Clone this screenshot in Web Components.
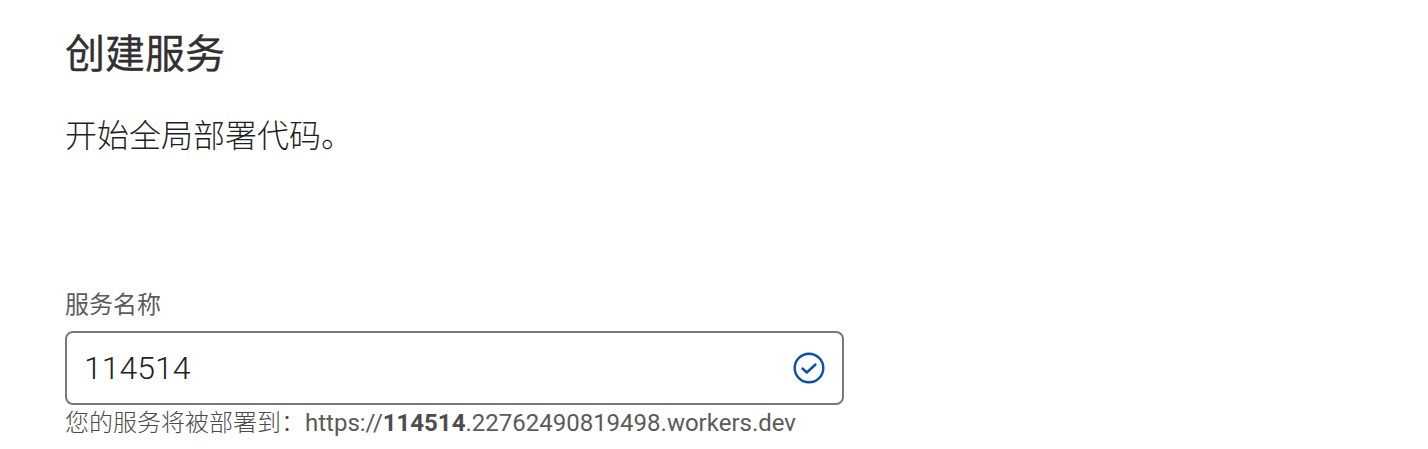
<!DOCTYPE html>
<html lang="zh-CN">
<head>
<meta charset="utf-8">
<title>创建服务</title>
<style>
  html, body { margin: 0; background: #fff; }
  body { font-family: Roboto, "Noto Sans CJK SC", sans-serif; }
</style>
</head>
<body>
<create-service>
  <service-field label="服务名称" value="114514">
    <span>您的服务将被部署到：</span>https://<b>114514</b>.22762490819498.workers.dev
  </service-field>
</create-service>

<script>
class CreateService extends HTMLElement {
  constructor() {
    super();
    this.attachShadow({ mode: 'open' });
    this.shadowRoot.innerHTML = `
      <style>
        :host { display: block; padding: 0 0 0 65px; color: #313131; font-family: Roboto, "Noto Sans CJK SC", sans-serif; }
        h1 { margin: 0; padding-top: 31px; font-size: 40px; line-height: 48px; font-weight: 400; -webkit-text-stroke: 0.3px #313131; }
        p { margin: 0; padding-top: 36px; font-size: 32px; line-height: 42px; font-weight: 300; color: #1f1f1f; }
        .body { padding-top: 132px; }
      </style>
      <h1>创建服务</h1>
      <p>开始全局部署代码。</p>
      <div class="body"><slot></slot></div>
    `;
  }
}

class ServiceField extends HTMLElement {
  constructor() {
    super();
    this.attachShadow({ mode: 'open' });
    const label = this.getAttribute('label') || '';
    const value = this.getAttribute('value') || '';
    this.shadowRoot.innerHTML = `
      <style>
        :host { display: block; width: 779px; }
        label { display: block; font-size: 24px; line-height: 32px; color: #5c5c5c; margin-bottom: 10px; }
        .box { display: flex; align-items: center; justify-content: space-between; box-sizing: border-box; height: 74px; padding: 0 16px 0 17px; border: 2px solid #797979; border-radius: 8px; background: #fff; }
        .val { font-size: 32px; color: #222; font-weight: 300; }
        svg { display: block; width: 34px; height: 34px; }
        .hint { font-size: 24px; line-height: 36px; color: #5a5a5a; white-space: nowrap; }
        ::slotted(b) { font-weight: 700; color: #4d4d4d; }
        ::slotted(span) { font-weight: 300; color: #4a4a4a; }
      </style>
      <label>${label}</label>
      <div class="box">
        <span class="val">${value}</span>
        <svg viewBox="0 0 34 34" fill="none" stroke="#0b4fa8" stroke-width="2.4">
          <circle cx="17" cy="17" r="14.3"/>
          <path d="M10.5 17.5L14.8 21.5L23.5 13.5" stroke-linecap="round" stroke-linejoin="round"/>
        </svg>
      </div>
      <div class="hint"><slot></slot></div>
    `;
  }
}

customElements.define('create-service', CreateService);
customElements.define('service-field', ServiceField);
</script>
</body>
</html>
